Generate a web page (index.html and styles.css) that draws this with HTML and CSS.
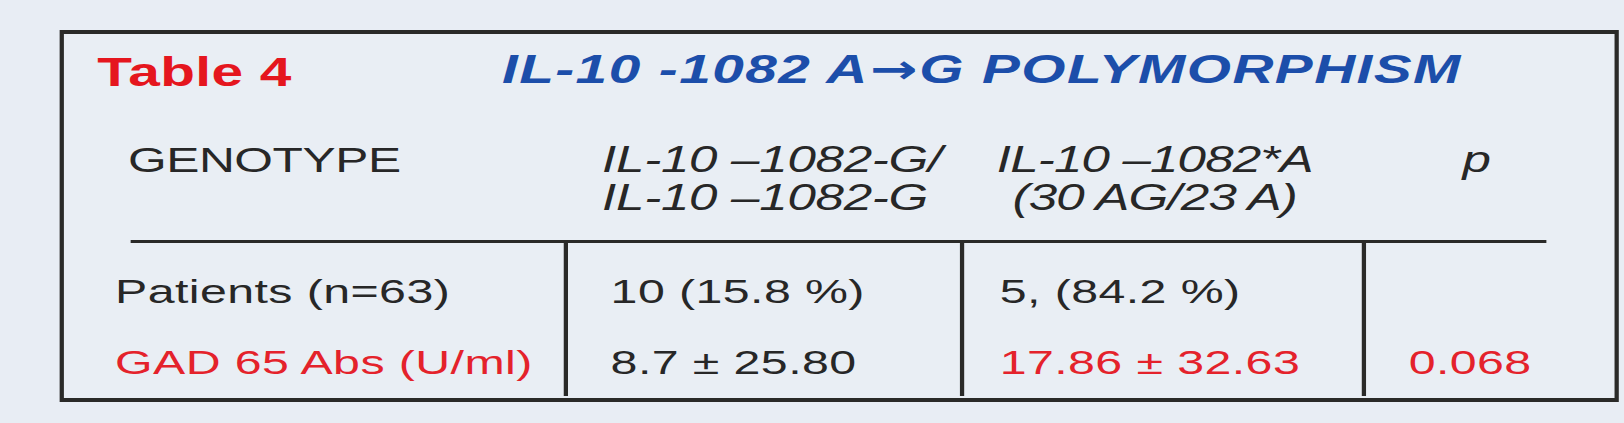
FILE: index.html
```html
<!DOCTYPE html>
<html lang="en">
<head>
<meta charset="utf-8">
<title>Table 4 – IL-10 -1082 A→G polymorphism</title>
<link rel="stylesheet" href="styles.css">
</head>
<body>
<div class="page">
  <div class="box">
    <div class="title-row">
      <div class="table-no">Table 4</div>
      <div class="table-title">IL-10 -1082 A<span class="arrow">→</span>G POLYMORPHISM</div>
    </div>

    <div class="grid head">
      <div class="h h1">GENOTYPE</div>
      <div class="h h2 it">
        <div>IL-10 –1082-G/</div>
        <div>IL-10 –1082-G</div>
      </div>
      <div class="h h3 it">
        <div class="stack">
          <div>IL-10 –1082*A</div>
          <div>(30 AG/23 A)</div>
        </div>
      </div>
      <div class="h h4 it">p</div>
    </div>

    <div class="rule"></div>

    <div class="grid data">
      <div class="c c1 r1">Patients (n=63)</div>
      <div class="c c2 r1 ln">10 (15.8 %)</div>
      <div class="c c3 r1 ln">5, (84.2 %)</div>
      <div class="c c4 r1 ln"></div>

      <div class="c c1 r2 red">GAD 65 Abs (U/ml)</div>
      <div class="c c2 r2 ln">8.7 ± 25.80</div>
      <div class="c c3 r2 ln red">17.86 ± 32.63</div>
      <div class="c c4 r2 ln red">0.068</div>
    </div>
  </div>
</div>
</body>
</html>
```

FILE: styles.css
```css
html, body {
  margin: 0;
  padding: 0;
  background: #e8edf4;
}

body {
  width: 1624px;
  height: 423px;
  overflow: hidden;
  font-family: "Liberation Sans", Arial, sans-serif;
  color: #272727;
}

/* The scanned sheet is stretched horizontally; lay out in natural units and stretch. */
.page {
  width: 1144px;
  padding-top: 30px;
  transform: scaleX(1.42);
  transform-origin: 0 0;
}

.box {
  box-sizing: border-box;
  margin-left: 41.5px;
  width: 1098.6px;
  height: 372px;
  border-style: solid;
  border-color: #2a2a28;
  border-width: 4px 3px;
  background: #e9eef4;
}

.title-row {
  display: flex;
  align-items: flex-start;
  padding: 14px 0 0 24px;
  height: 48px;
  font-weight: bold;
  font-size: 40px;
  line-height: 48px;
}

.table-no {
  width: 285px;
  color: #e5161e;
  letter-spacing: 0.3px;
}

.table-title {
  color: #1c4eaa;
  font-style: italic;
  margin-top: -3px;
  letter-spacing: 1px;
}

.arrow {
  font-family: "DejaVu Sans", sans-serif;
  font-style: normal;
  font-weight: bold;
  font-size: 40px;
  line-height: 40px;
  letter-spacing: 0;
  margin: 0 1px 0 1px;
}

.grid {
  display: grid;
  grid-template-columns: 352px 279.5px 283px 1fr;
}

.head {
  margin-top: 45px;
  height: 76px;
}

.h {
  font-size: 35px;
  line-height: 38px;
}

.it {
  font-style: italic;
  font-size: 36px;
}

.h1 { padding-left: 45.6px; letter-spacing: -0.3px; }
.h2 { padding-left: 27.5px; letter-spacing: -0.2px; }
.h3 { padding-left: 26px; letter-spacing: -0.6px; }
.h4 { padding-left: 71px; }

.stack {
  display: inline-flex;
  flex-direction: column;
  align-items: center;
}

.rule {
  margin: 23px 48.6px 0 47px;
  height: 3px;
  background: #2a2a28;
}

.c {
  font-size: 34px;
  line-height: 40px;
  height: 40px;
  letter-spacing: 0.3px;
}

.r1 {
  padding-top: 28px;
  padding-bottom: 15.5px;
}

.r2 {
  padding-top: 15.5px;
  padding-bottom: 14px;
}

.ln {
  border-left: 3px solid #2a2a28;
}

.c1 { padding-left: 36.5px; }
.c2 { padding-left: 30.5px; }
.c3 { padding-left: 25px; }
.c4 { padding-left: 30px; }

.red {
  color: #e4222b;
}
```
